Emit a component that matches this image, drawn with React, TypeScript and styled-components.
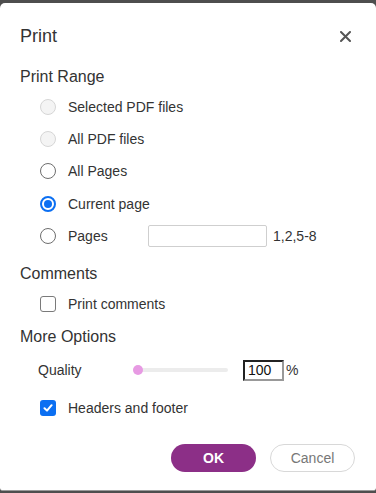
import React from "react";
import styled, { createGlobalStyle } from "styled-components";

const Global = createGlobalStyle`
  html, body { margin: 0; padding: 0; }
  body {
    background: #5a5a5a;
    font-family: "Liberation Sans", Arial, Helvetica, sans-serif;
    color: #333;
  }
`;

const Page = styled.div`
  width: 376px;
  height: 493px;
  padding-top: 3px;
  box-sizing: border-box;
  background: #4e4e4e;
`;

const Dialog = styled.div`
  background: #fff;
  height: 488px;
  border-radius: 5px 5px 3px 3px;
  box-sizing: border-box;
  padding: 0 20px 0 20px;
  display: flex;
  flex-direction: column;
  border-bottom: 1px solid #9a9a9a;
`;

const Header = styled.div`
  display: flex;
  align-items: center;
  justify-content: space-between;
  height: 26px;
  margin-top: 20px;
`;

const Title = styled.h1`
  margin: 0;
  font-size: 18px;
  font-weight: 400;
  color: #333;
`;

const Close = styled.button`
  border: 0;
  background: none;
  padding: 0;
  width: 14px;
  height: 14px;
  margin-right: 4px;
  display: flex;
  align-items: center;
  justify-content: center;
  cursor: pointer;
`;

const SectionTitle = styled.h2<{ $mt: number }>`
  margin: ${(p) => p.$mt}px 0 0 0;
  font-size: 16px;
  font-weight: 400;
  color: #333;
  line-height: 20px;
`;

const List = styled.div<{ $pt?: number }>`
  display: flex;
  flex-direction: column;
  padding-left: 20px;
  padding-top: ${(p) => p.$pt ?? 0}px;
`;

const Row = styled.label<{ $h: number }>`
  display: flex;
  align-items: center;
  height: ${(p) => p.$h}px;
  font-size: 14px;
  color: #333;
`;

const Radio = styled.span<{ $state: "disabled" | "off" | "on" }>`
  box-sizing: border-box;
  width: 16px;
  height: 16px;
  border-radius: 50%;
  flex: none;
  margin-right: 12px;
  display: flex;
  align-items: center;
  justify-content: center;
  background: ${(p) => (p.$state === "disabled" ? "#f4f4f4" : "#fff")};
  border: ${(p) =>
    p.$state === "disabled"
      ? "1px solid #d6d6d6"
      : p.$state === "on"
      ? "2px solid #0b6ff2"
      : "1px solid #6e6e6e"};
  &::after {
    content: "";
    display: ${(p) => (p.$state === "on" ? "block" : "none")};
    width: 8px;
    height: 8px;
    border-radius: 50%;
    background: #0b6ff2;
  }
`;

const PagesLabel = styled.span`
  width: 80px;
`;

const TextInput = styled.input`
  box-sizing: border-box;
  width: 119px;
  height: 22px;
  border: 1px solid #cfcfcf;
  border-radius: 2px;
  margin-right: 6px;
  font: inherit;
`;

const Hint = styled.span`
  font-size: 14px;
  color: #333;
`;

const Check = styled.span<{ $on?: boolean }>`
  box-sizing: border-box;
  width: 16px;
  height: 16px;
  border-radius: 3px;
  flex: none;
  margin-right: 12px;
  display: flex;
  align-items: center;
  justify-content: center;
  background: ${(p) => (p.$on ? "#0b6ff2" : "#fff")};
  border: ${(p) => (p.$on ? "none" : "1px solid #7a7a7a")};
`;

const QualityRow = styled.div`
  display: flex;
  align-items: center;
  height: 32px;
  margin-top: 7px;
  padding-left: 18px;
  font-size: 14px;
  color: #333;
`;

const QualityLabel = styled.span`
  width: 90px;
`;

const Slider = styled.div`
  position: relative;
  width: 95px;
  height: 4px;
  background: #ececec;
  border-radius: 2px;
  margin-left: 5px;
  margin-right: 15px;
`;

const Thumb = styled.span`
  position: absolute;
  left: 0;
  top: -3px;
  width: 10px;
  height: 10px;
  border-radius: 50%;
  background: #e79ae3;
`;

const NumInput = styled.input`
  box-sizing: border-box;
  width: 41px;
  height: 21px;
  border: 2px solid #222;
  border-right-color: #999;
  border-bottom-color: #999;
  padding: 0 3px;
  font-family: "Liberation Sans", Arial, sans-serif;
  font-size: 14px;
  color: #111;
  margin-right: 2px;
`;

const Footer = styled.div`
  display: flex;
  justify-content: flex-end;
  gap: 14px;
  margin-top: 19px;
  padding-right: 1px;
`;

const Button = styled.button<{ $primary?: boolean }>`
  width: 85px;
  height: 28px;
  border-radius: 14px;
  font-family: "Liberation Sans", Arial, sans-serif;
  font-size: 14px;
  cursor: pointer;
  background: ${(p) => (p.$primary ? "#8c2f87" : "#fff")};
  color: ${(p) => (p.$primary ? "#fff" : "#777")};
  border: ${(p) => (p.$primary ? "none" : "1px solid #d8d8d8")};
  font-weight: ${(p) => (p.$primary ? 700 : 400)};
`;

export default function App() {
  return (
    <>
      <Global />
      <Page>
        <Dialog>
          <Header>
            <Title>Print</Title>
            <Close aria-label="Close">
              <svg width="11" height="11" viewBox="0 0 11 11">
                <path d="M1 1L10 10M10 1L1 10" stroke="#555" strokeWidth="2" strokeLinecap="round" />
              </svg>
            </Close>
          </Header>
          <SectionTitle $mt={18}>Print Range</SectionTitle>
          <List $pt={3}>
            <Row $h={33}><Radio $state="disabled" />Selected PDF files</Row>
            <Row $h={32}><Radio $state="disabled" />All PDF files</Row>
            <Row $h={32}><Radio $state="off" />All Pages</Row>
            <Row $h={33}><Radio $state="on" />Current page</Row>
            <Row $h={32}>
              <Radio $state="off" />
              <PagesLabel>Pages</PagesLabel>
              <TextInput />
              <Hint>1,2,5-8</Hint>
            </Row>
          </List>
          <SectionTitle $mt={12}>Comments</SectionTitle>
          <List $pt={4}>
            <Row $h={32}><Check />Print comments</Row>
          </List>
          <SectionTitle $mt={7}>More Options</SectionTitle>
          <QualityRow>
            <QualityLabel>Quality</QualityLabel>
            <Slider><Thumb /></Slider>
            <NumInput defaultValue="100" />
            <span>%</span>
          </QualityRow>
          <List $pt={5}>
            <Row $h={34}>
              <Check $on>
                <svg width="10" height="10" viewBox="0 0 10 10">
                  <path d="M1.5 5.2L4 7.6L8.6 2.2" stroke="#fff" strokeWidth="2" fill="none" strokeLinecap="round" strokeLinejoin="round" />
                </svg>
              </Check>
              Headers and footer
            </Row>
          </List>
          <Footer>
            <Button $primary>OK</Button>
            <Button>Cancel</Button>
          </Footer>
        </Dialog>
      </Page>
    </>
  );
}
